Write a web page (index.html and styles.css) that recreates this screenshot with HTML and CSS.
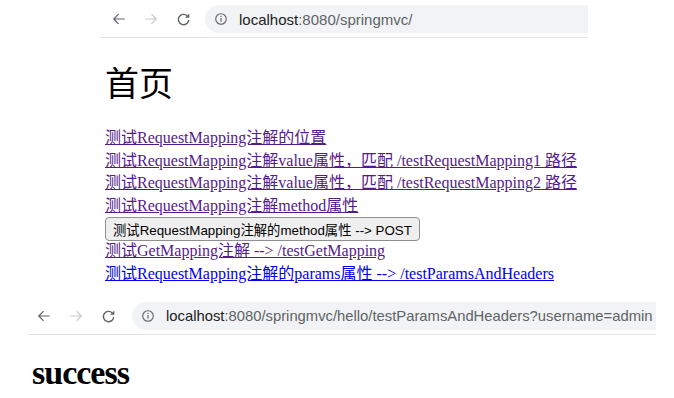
FILE: index.html
```html
<!DOCTYPE html>
<html lang="zh-CN">
<head>
    <meta charset="UTF-8">
    <meta name="viewport" content="width=device-width, initial-scale=1.0">
    <title>首页</title>
    <link rel="stylesheet" href="styles.css">
</head>
<body>
    <!-- First browser window: index page -->
    <div class="window window-top">
        <div class="toolbar">
            <span class="nav-icon">
                <svg width="14" height="14" viewBox="0 0 16 16"><path d="M14.5 8H2 M7.5 2.5L2 8l5.5 5.5" fill="none" stroke="#5f6368" stroke-width="1.4"/></svg>
            </span>
            <span class="nav-icon">
                <svg width="14" height="14" viewBox="0 0 16 16"><path d="M1.5 8H14 M8.5 2.5L14 8l-5.5 5.5" fill="none" stroke="#c4c7cb" stroke-width="1.4"/></svg>
            </span>
            <span class="nav-icon">
                <svg width="15" height="15" viewBox="0 0 16 16"><path d="M13.5 8.5a5.5 5.5 0 1 1-1.6-4.4" fill="none" stroke="#5f6368" stroke-width="1.5"/><path d="M14.2 1.5v4.6H9.6z" fill="#5f6368"/></svg>
            </span>
            <div class="omnibox">
                <svg class="info-icon" width="12" height="12" viewBox="0 0 12 12"><circle cx="6" cy="6" r="5.3" fill="none" stroke="#5f6368" stroke-width="1.1"/><rect x="5.45" y="5" width="1.1" height="3.8" fill="#5f6368"/><circle cx="6" cy="3.4" r="0.7" fill="#5f6368"/></svg>
                <span class="url"><span class="host">localhost</span>:8080/springmvc/</span>
            </div>
        </div>
        <div class="page page-index">
            <h1 class="title">首页</h1>
            <div class="links">
                <a href="#" class="visited">测试RequestMapping注解的位置</a>
                <a href="#" class="visited">测试RequestMapping注解value属性，匹配 /testRequestMapping1 路径</a>
                <a href="#" class="visited">测试RequestMapping注解value属性，匹配 /testRequestMapping2 路径</a>
                <a href="#" class="visited">测试RequestMapping注解method属性</a>
                <button type="button" class="post-button">测试RequestMapping注解的method属性 --&gt; POST</button>
                <a href="#" class="visited">测试GetMapping注解 --&gt; /testGetMapping</a>
                <a href="#">测试RequestMapping注解的params属性 --&gt; /testParamsAndHeaders</a>
            </div>
        </div>
    </div>

    <!-- Second browser window: result page -->
    <div class="window window-bottom">
        <div class="toolbar">
            <span class="nav-icon">
                <svg width="14" height="14" viewBox="0 0 16 16"><path d="M14.5 8H2 M7.5 2.5L2 8l5.5 5.5" fill="none" stroke="#5f6368" stroke-width="1.4"/></svg>
            </span>
            <span class="nav-icon">
                <svg width="14" height="14" viewBox="0 0 16 16"><path d="M1.5 8H14 M8.5 2.5L14 8l-5.5 5.5" fill="none" stroke="#c4c7cb" stroke-width="1.4"/></svg>
            </span>
            <span class="nav-icon">
                <svg width="15" height="15" viewBox="0 0 16 16"><path d="M13.5 8.5a5.5 5.5 0 1 1-1.6-4.4" fill="none" stroke="#5f6368" stroke-width="1.5"/><path d="M14.2 1.5v4.6H9.6z" fill="#5f6368"/></svg>
            </span>
            <div class="omnibox">
                <svg class="info-icon" width="12" height="12" viewBox="0 0 12 12"><circle cx="6" cy="6" r="5.3" fill="none" stroke="#5f6368" stroke-width="1.1"/><rect x="5.45" y="5" width="1.1" height="3.8" fill="#5f6368"/><circle cx="6" cy="3.4" r="0.7" fill="#5f6368"/></svg>
                <span class="url"><span class="host">localhost</span>:8080/springmvc/hello/testParamsAndHeaders?username=admin</span>
            </div>
        </div>
        <div class="page page-result">
            <h1 class="success">success</h1>
        </div>
    </div>
</body>
</html>
```

FILE: styles.css
```css
body {
    margin: 0;
    padding: 0;
    background-color: #ffffff;
    font-family: "Liberation Serif", "Noto Sans CJK SC", serif;
}

/* Browser window frames */
.window {
    overflow: hidden;
}

.window-top {
    margin-left: 100px;
    width: 488px;
    height: 297px;
}

.window-bottom {
    margin-left: 28px;
    width: 628px;
}

.toolbar {
    display: flex;
    align-items: center;
    height: 38px;
    padding-left: 3px;
    border-bottom: 1px solid #e1e3e6;
    box-sizing: border-box;
}

.window-bottom .toolbar {
    padding-left: 0;
}

.nav-icon {
    width: 32px;
    display: flex;
    justify-content: center;
    align-items: center;
    margin-top: 1px;
}

.omnibox {
    flex: 1;
    display: flex;
    align-items: center;
    height: 28px;
    margin-left: 6px;
    margin-top: 1px;
    padding-left: 10px;
    background-color: #f1f3f4;
    border-radius: 14px 0 0 14px;
    white-space: nowrap;
    overflow: hidden;
}

.window-bottom .omnibox {
    margin-left: 8px;
}

.info-icon {
    flex: none;
    margin-right: 12px;
}

.url {
    font-family: "Liberation Sans", Arial, sans-serif;
    font-size: 15px;
    color: #5f6368;
}

.window-bottom .url {
    font-size: 14.8px;
}

.host {
    color: #202124;
}

/* Index page */
.page-index {
    padding-left: 5px;
}

.title {
    font-family: "Noto Sans CJK SC", sans-serif;
    font-size: 34px;
    font-weight: 400;
    line-height: 40px;
    margin: 24px 0 25px;
    color: #000000;
}

.links {
    display: flex;
    flex-direction: column;
    align-items: flex-start;
}

.links a {
    font-size: 16px;
    line-height: 22.5px;
    color: #0000ee;
}

.links a.visited {
    color: #551a8b;
}

.post-button {
    font-family: "Liberation Sans", "Noto Sans CJK SC", sans-serif;
    font-size: 13.33px;
    height: 24px;
    padding: 0 7px;
    margin: 0 0 -1px;
    color: #000000;
    background-color: #efefef;
    border: 1px solid #8f8f8f;
    border-radius: 4px;
}

/* Result page */
.page-result {
    padding-left: 4px;
}

.success {
    font-family: "Liberation Serif", serif;
    font-size: 34px;
    font-weight: bold;
    letter-spacing: -1px;
    line-height: 40px;
    margin: 18px 0 0;
    color: #000000;
}
```
